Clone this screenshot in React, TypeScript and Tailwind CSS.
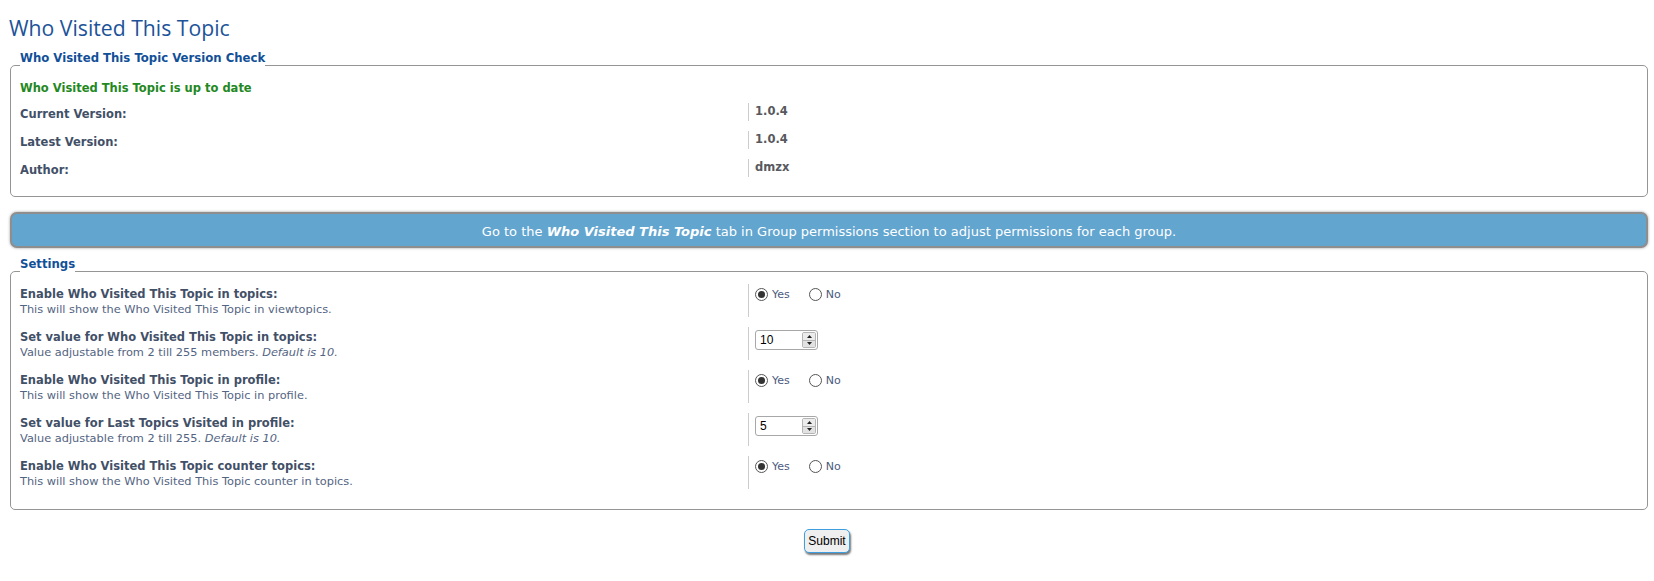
import { ReactNode } from 'react';

interface Setting {
  label: string;
  desc: ReactNode;
  kind: 'radio' | 'number';
  value?: string;
}

const settings: Setting[] = [
  {
    label: 'Enable Who Visited This Topic in topics:',
    desc: 'This will show the Who Visited This Topic in viewtopics.',
    kind: 'radio'
  },
  {
    label: 'Set value for Who Visited This Topic in topics:',
    desc: (
      <>
        Value adjustable from 2 till 255 members. <i>Default is 10.</i>
      </>
    ),
    kind: 'number',
    value: '10'
  },
  {
    label: 'Enable Who Visited This Topic in profile:',
    desc: 'This will show the Who Visited This Topic in profile.',
    kind: 'radio'
  },
  {
    label: 'Set value for Last Topics Visited in profile:',
    desc: (
      <>
        Value adjustable from 2 till 255. <i>Default is 10.</i>
      </>
    ),
    kind: 'number',
    value: '5'
  },
  {
    label: 'Enable Who Visited This Topic counter topics:',
    desc: 'This will show the Who Visited This Topic counter in topics.',
    kind: 'radio'
  }
];

const versionRows = [
  { label: 'Current Version:', value: '1.0.4' },
  { label: 'Latest Version:', value: '1.0.4' },
  { label: 'Author:', value: 'dmzx' }
];

function Radio({ checked, label }: { checked?: boolean; label: string }) {
  return (
    <span className="flex items-center">
      <span className="w-[13px] h-[13px] rounded-full border border-[#555555] bg-white flex items-center justify-center">
        {checked && <span className="w-[7px] h-[7px] rounded-full bg-[#333333]" />}
      </span>
      <span className="ml-[4px] text-[#4c5a7e] leading-[13px]">{label}</span>
    </span>
  );
}

function NumberBox({ value }: { value: string }) {
  return (
    <div className="w-[63px] h-[20px] border border-[#a8a8a8] rounded-[3px] bg-white flex items-center justify-between pl-[4px] pr-[1px]">
      <span className="text-[12px] text-black font-['Liberation_Sans',sans-serif]">{value}</span>
      <div className="w-[14px] h-[16px] flex flex-col border border-[#b5b5b5] rounded-[2px] overflow-hidden">
        <div className="flex-1 bg-[#ececec] flex items-center justify-center border-b border-[#b5b5b5]">
          <svg width="5" height="3" viewBox="0 0 5 3"><path d="M0 3 L2.5 0 L5 3 Z" fill="#222" /></svg>
        </div>
        <div className="flex-1 bg-[#e2e2e2] flex items-center justify-center">
          <svg width="5" height="3" viewBox="0 0 5 3"><path d="M0 0 L2.5 3 L5 0 Z" fill="#222" /></svg>
        </div>
      </div>
    </div>
  );
}

export default function App() {
  return (
    <div className="bg-white min-h-[581px] font-['DejaVu_Sans',Verdana,sans-serif] text-[11px] pb-[20px]">
      <h1 className="ml-[9px] pt-[13px] h-[52px] text-[21.2px] leading-[30px] text-[#1c5399] font-['Open_Sans',sans-serif]">
        Who Visited This Topic
      </h1>

      {/* Version check */}
      <fieldset className="ml-[10px] mr-[6px] border border-[#959595] rounded-[5px] px-[9px] pb-[19px]">
        <legend className="p-0 pb-[13px] leading-[13px] text-[11.7px] font-bold text-[#115098]">
          Who Visited This Topic Version Check
        </legend>
        <p className="mt-[3px] leading-[14px] text-[11.5px] font-bold text-[#228822]">Who Visited This Topic is up to date</p>
        <div className="mt-[8px] flex flex-col gap-[10px]">
          {versionRows.map((row) => (
            <div key={row.label} className="flex h-[18px] text-[11.5px]">
              <div className="w-[45%] pt-[4px] leading-[14px] font-bold text-[#425067]">{row.label}</div>
              <div className="flex-1 border-l border-[#cccccc] pl-[6px] pt-[1px] leading-[14px] font-bold text-[#58595e]">
                {row.value}
              </div>
            </div>
          ))}
        </div>
      </fieldset>

      {/* Permissions notice */}
      <div className="mt-[15px] ml-[10px] mr-[6px] h-[36px] border-2 border-[#8e8e8e] rounded-[7px] bg-[#62a5cf] shadow-[0_0_3px_#a0a0a0] flex items-center justify-center pt-[4px] text-[13px] text-white">
        <span>
          Go to the <b><i>Who Visited This Topic</i></b> tab in Group permissions section to adjust permissions for each group.
        </span>
      </div>

      {/* Settings */}
      <fieldset className="mt-[10px] ml-[10px] mr-[6px] border border-[#959595] rounded-[5px] px-[9px] pb-[20px]">
        <legend className="p-0 pb-[13px] leading-[13px] text-[11.7px] font-bold text-[#115098]">Settings</legend>
        <div className="flex flex-col gap-[10px]">
          {settings.map((s) => (
            <div key={s.label} className="flex h-[33px]">
              <div className="w-[45%] pt-[3px]">
                <div className="font-bold text-[11.5px] text-[#425067] leading-[14px]">{s.label}</div>
                <div className="text-[11.35px] text-[#536482] leading-[17px]">{s.desc}</div>
              </div>
              <div className="flex-1 h-[33px] border-l border-[#cccccc] pl-[6px]">
                {s.kind === 'radio' ? (
                  <div className="pt-[4px] flex gap-[19px]">
                    <Radio checked label="Yes" />
                    <Radio label="No" />
                  </div>
                ) : (
                  <div className="pt-[3px]">
                    <NumberBox value={s.value ?? ''} />
                  </div>
                )}
              </div>
            </div>
          ))}
        </div>
      </fieldset>

      <div className="mt-[19px] flex justify-center">
        <button className="h-[24px] px-[3px] border border-[#3e9fe0] rounded-[5px] bg-[#efefef] shadow-[1px_2px_2px_#777] text-[12px] text-black font-['Liberation_Sans',sans-serif]">
          Submit
        </button>
      </div>
    </div>
  );
}
